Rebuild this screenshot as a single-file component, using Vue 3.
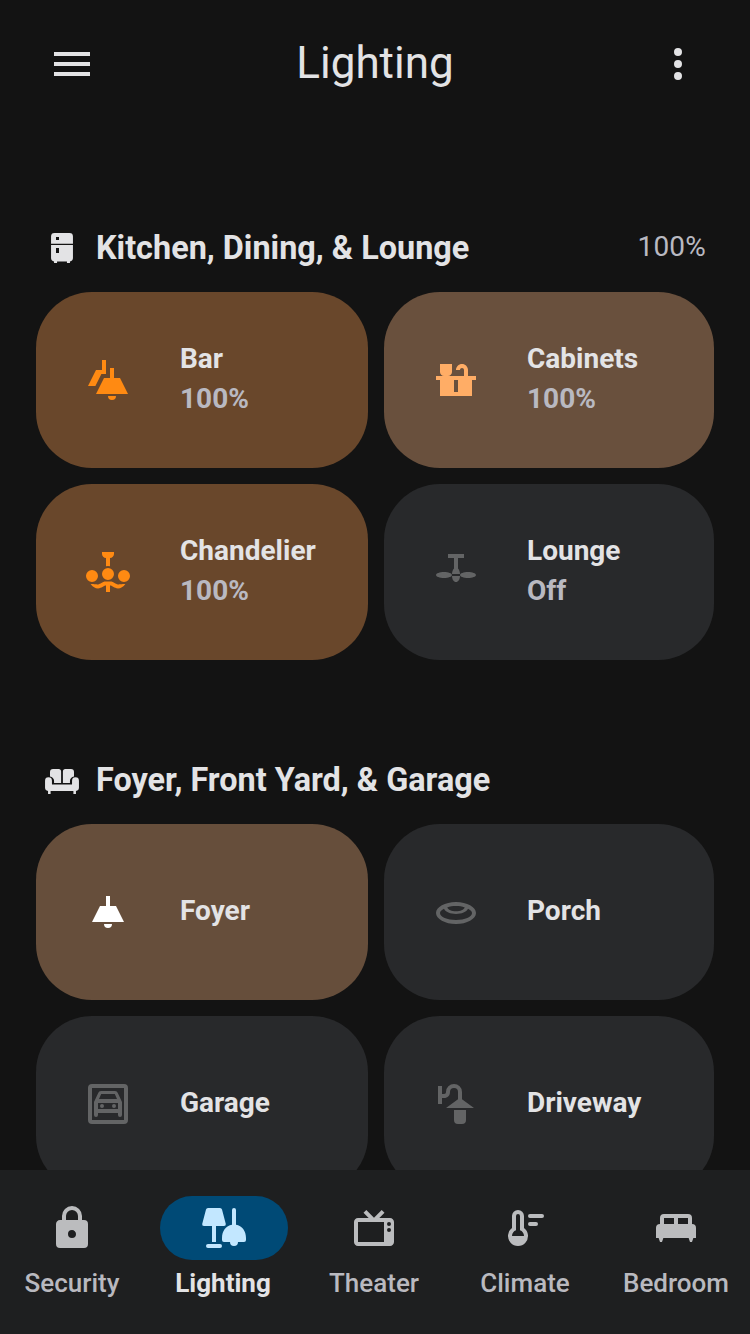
<script setup>
const icons = {
  menu: 'M3 6H21V8H3ZM3 11H21V13H3ZM3 16H21V18H3Z',
  more: 'M12 16a2 2 0 1 1 0 4 2 2 0 0 1 0-4M12 10a2 2 0 1 1 0 4 2 2 0 0 1 0-4M12 4a2 2 0 1 1 0 4 2 2 0 0 1 0-4',
  fridge: 'M7 2H17A2.3 2.3 0 0 1 19.3 4.3V9.2H4.7V4.3A2.3 2.3 0 0 1 7 2ZM4.7 10H19.3V18.7A2.3 2.3 0 0 1 17.3 21V22H15.3V21H8.7V22H6.7V21A2.3 2.3 0 0 1 4.7 18.7ZM8 4.7V6.7H10V4.7ZM8 12V15.3H10V12Z',
  sofa: 'M6 4.7H9.6A1.7 1.7 0 0 1 11.4 6.4V14H6.7V12.5C6.7 11 5.5 10 4 9.6V6.7A2 2 0 0 1 6 4.7ZM14.4 4.7H18A2 2 0 0 1 20 6.7V9.6C18.5 10 17.3 11 17.3 12.5V14H12.6V6.4A1.7 1.7 0 0 1 14.4 4.7ZM3 10.2A2.3 2.3 0 0 1 5.3 12.5V15H18.7V12.5A2.3 2.3 0 0 1 23.3 12.5V17.2A2.2 2.2 0 0 1 21.3 19.3V21.3H19.6V19.4H4.4V21.3H2.7V19.3A2.2 2.2 0 0 1 .7 17.2V12.5A2.3 2.3 0 0 1 3 10.2Z',
  pendants: 'M13 6H15V11H18L22 19H6L10 11H13ZM12 20H16A2 2 0 0 1 12 20ZM9 2H11V9H8.7L5.7 15H2L6 7H9Z',
  counter: 'M22 10H18V7C18 5.34 16.66 4 15 4S12 5.34 12 7H14C14 6.45 14.45 6 15 6S16 6.45 16 7V10H8C9.1 10 10 9.1 10 8V4H4V8C4 9.1 4.9 10 6 10H2V12H4V20H20V12H22ZM13 18H11V12H13Z',
  chandelier: 'M9 2H15V3C15 4.1 14.1 5 13 5V9.1A4 4 0 0 0 11 9.1V5C9.9 5 9 4.1 9 3ZM12 10a3 3 0 1 1 0 6 3 3 0 0 1 0-6M4 11a3 3 0 1 1 0 6 3 3 0 0 1 0-6M20 11a3 3 0 1 1 0 6 3 3 0 0 1 0-6M3.3 18C5.5 18 5.8 18.2 7 18.2C8.4 18.2 8.8 16.8 11 16.8H13C15.2 16.8 15.6 18.2 17 18.2C18.2 18.2 18.5 18 20.7 18C19.6 19.5 18.4 20.2 17 20.2C15 20.2 14.4 18.8 13 18.8V22H11V18.8C9.6 18.8 9 20.2 7 20.2C5.6 20.2 4.4 19.5 3.3 18Z',
  fan: 'M8 3H16V5H13V10.3C13.6 10.9 14 12 14 13H10C10 12 10.4 10.9 11 10.3V5H8ZM10 14H14C14 15.7 13.1 17 12 17S10 15.7 10 14ZM6 12C8.2 12 10 12.7 10 13.5S8.2 15 6 15 2 14.3 2 13.5 3.8 12 6 12ZM18 12C20.2 12 22 12.7 22 13.5S20.2 15 18 15 14 14.3 14 13.5 15.8 12 18 12Z',
  pendant: 'M11 4H13V9H16L20 17H4L8 9H11ZM10 18H14A2 2 0 0 1 10 18Z',
  recessed: 'M12 7C17.5 7 22 9.5 22 12.5S17.5 18 12 18 2 15.5 2 12.5 6.5 7 12 7ZM12 9C10.4 9 8.9 9.2 7.6 9.7C8.1 10.8 9.8 11.6 12 11.6S15.9 10.8 16.4 9.7C15.1 9.2 13.6 9 12 9ZM6 10.4C4.8 11 4 11.7 4 12.5C4 14.4 7.6 16 12 16S20 14.4 20 12.5C20 11.7 19.2 11 18 10.4C17.2 12 14.9 13 12 13S6.8 12 6 10.4Z',
  garage: 'M4 2H20A2 2 0 0 1 22 4V20A2 2 0 0 1 20 22H4A2 2 0 0 1 2 20V4A2 2 0 0 1 4 2ZM4 4V20H20V4ZM8.5 5.5H15.5A1.5 1.5 0 0 1 16.9 6.5L19 11V17.5A1 1 0 0 1 17 17.5V16.5H7V17.5A1 1 0 0 1 5 17.5V11L7.1 6.5A1.5 1.5 0 0 1 8.5 5.5ZM8.6 7L7.5 9.5H16.5L15.4 7ZM7 11.5V14.5H17V11.5ZM9 12a1 1 0 1 1 0 2 1 1 0 0 1 0-2M15 12a1 1 0 1 1 0 2 1 1 0 0 1 0-2',
  coach: 'M3 3H5V7H6C6.7 7 7 6.6 7 6A4 4 0 0 1 15 6V9.6L21 14H7L13 9.6V6A2 2 0 0 0 9 6C9 7.8 7.9 9 6 9H5V12H3ZM11 15H17V20A2 2 0 0 1 15 22H13A2 2 0 0 1 11 20Z',
  lock: 'M12 17A2 2 0 0 0 14 15C14 13.89 13.1 13 12 13A2 2 0 0 0 12 17M18 8A2 2 0 0 1 20 10V20A2 2 0 0 1 18 22H6A2 2 0 0 1 4 20V10C4 8.89 4.9 8 6 8H7V6A5 5 0 0 1 17 6V8H18M12 3A3 3 0 0 0 9 6V8H15V6A3 3 0 0 0 12 3Z',
  lamps: 'M4 2H10Q10.8 2 11 2.8L12.9 10Q13 11 12 11H8V19H6V11H2Q.9 11 1.1 10L3 2.8Q3.2 2 4 2ZM4 20H10A1 1 0 0 1 10 22H4A1 1 0 0 1 4 20ZM16 3A1 1 0 0 1 18 3V10.4C21 10.9 23 13.5 23 17V18Q23 19 22 19H19A2 2 0 0 1 15 19H12Q11 19 11 18V17C11 13.5 13 10.9 16 10.4Z',
  tv: 'M8.16 3L6.75 4.41L9.34 7H4C2.89 7 2 7.89 2 9V19C2 20.11 2.89 21 4 21H20C21.11 21 22 20.11 22 19V9C22 7.89 21.11 7 20 7H14.66L17.25 4.41L15.84 3L12 6.84ZM4 9H17V19H4ZM19.5 9a1 1 0 1 1 0 2 1 1 0 0 1 0-2M19.5 12a1 1 0 1 1 0 2 1 1 0 0 1 0-2',
  thermometer: 'M8 3A3 3 0 0 1 11 6V12A5 5 0 1 1 5 12V6A3 3 0 0 1 8 3M8 5A1 1 0 0 0 7 6V13.17C5.83 13.58 5 14.7 5 16H11C11 14.7 10.17 13.58 9 13.17V6A1 1 0 0 0 8 5M14 5H20A1 1 0 0 1 20 7H14A1 1 0 0 1 14 5M14 9H17A1 1 0 0 1 17 11H14A1 1 0 0 1 14 9',
  bed: 'M20 10V7A2 2 0 0 0 18 5H6A2 2 0 0 0 4 7V10A2 2 0 0 0 2 12V17H3.33L4 19H5L5.67 17H18.33L19 19H20L20.67 17H22V12A2 2 0 0 0 20 10M11 10H6V7H11ZM18 10H13V7H18Z'
}

const sections = [
  {
    title: 'Kitchen, Dining, & Lounge', icon: 'fridge', level: '100%',
    cards: [
      { name: 'Bar', state: '100%', icon: 'pendants', tone: 'amber' },
      { name: 'Cabinets', state: '100%', icon: 'counter', tone: 'peach' },
      { name: 'Chandelier', state: '100%', icon: 'chandelier', tone: 'amber' },
      { name: 'Lounge', state: 'Off', icon: 'fan', tone: 'off' }
    ]
  },
  {
    title: 'Foyer, Front Yard, & Garage', icon: 'sofa',
    cards: [
      { name: 'Foyer', icon: 'pendant', tone: 'white' },
      { name: 'Porch', icon: 'recessed', tone: 'off' },
      { name: 'Garage', icon: 'garage', tone: 'off' },
      { name: 'Driveway', icon: 'coach', tone: 'off' }
    ]
  }
]

const tabs = [
  { name: 'Security', icon: 'lock' },
  { name: 'Lighting', icon: 'lamps', active: true },
  { name: 'Theater', icon: 'tv' },
  { name: 'Climate', icon: 'thermometer' },
  { name: 'Bedroom', icon: 'bed' }
]
</script>

<template>
  <div class="app">
    <header class="top">
      <svg class="icon" viewBox="0 0 24 24"><path :d="icons.menu" /></svg>
      <h1>Lighting</h1>
      <svg class="icon" viewBox="0 0 24 24"><path :d="icons.more" /></svg>
    </header>

    <main>
      <section v-for="s in sections" :key="s.title">
        <div class="heading">
          <svg class="icon small" viewBox="0 0 24 24"><path fill-rule="evenodd" :d="icons[s.icon]" /></svg>
          <h2>{{ s.title }}</h2>
          <span v-if="s.level" class="level">{{ s.level }}</span>
        </div>
        <div class="cards">
          <div v-for="c in s.cards" :key="c.name" class="card" :class="c.tone">
            <svg class="icon" viewBox="0 0 24 24"><path fill-rule="evenodd" :d="icons[c.icon]" /></svg>
            <div class="text">
              <div>{{ c.name }}</div>
              <div v-if="c.state" class="state">{{ c.state }}</div>
            </div>
          </div>
        </div>
      </section>
    </main>

    <nav>
      <div v-for="t in tabs" :key="t.name" class="tab" :class="{ active: t.active }">
        <div class="pill">
          <svg class="icon" viewBox="0 0 24 24"><path fill-rule="evenodd" :d="icons[t.icon]" /></svg>
        </div>
        <span>{{ t.name }}</span>
      </div>
    </nav>
  </div>
</template>

<style>
body { background: #131313; }
</style>

<style scoped>
.app {
  display: flex;
  flex-direction: column;
  height: 1334px;
  overflow: hidden;
  background: #131313;
  color: #e3e3e5;
  font-family: Roboto, "Liberation Sans", sans-serif;
}
.icon { display: block; flex: none; width: 48px; height: 48px; fill: currentColor; }
.small { width: 36px; height: 36px; }
h1, h2 { margin: 0; }
.top {
  flex: none;
  display: flex;
  align-items: center;
  justify-content: space-between;
  height: 128px;
  padding: 0 48px;
  box-sizing: border-box;
}
h1 { padding-bottom: 2px; font-size: 44px; font-weight: 400; line-height: 56px; }
main { flex: 1; min-height: 0; overflow: hidden; padding: 76px 36px 0; }
section { margin-bottom: 76px; }
.heading {
  display: flex;
  align-items: center;
  height: 88px;
  padding: 0 8px;
}
h2 { margin-left: 16px; font-size: 32.4px; font-weight: 700; line-height: 40px; }
.level { margin-left: auto; padding-bottom: 4px; font-size: 28px; letter-spacing: 0.2px; color: #b9b9c1; }
.cards { display: grid; grid-template-columns: 332px 330px; grid-auto-rows: 176px; gap: 16px; }
.card {
  display: flex;
  align-items: center;
  padding-left: 48px;
  border-radius: 56px;
  background: #28292b;
}
.card .text { margin-left: 48px; padding-bottom: 2px; font-size: 28px; font-weight: 700; line-height: 40px; }
.card:nth-child(even) .text { margin-left: 47px; }
.card .state { color: #b9b9c1; }
.card.amber { background: #69472b; }
.card.amber .icon { color: #ff8a12; }
.card.peach { background: #69503d; }
.card.peach .icon { color: #ffad66; }
.card.white { background: #664e3b; }
.card.white .icon { color: #fff; }
.card.off .icon { color: #636465; }
nav {
  flex: none;
  display: grid;
  grid-template-columns: repeat(5, 151px);
  height: 164px;
  margin-left: -3.5px;
  padding-top: 26px;
  box-sizing: border-box;
  background: #1e1f20;
}
.tab {
  display: flex;
  flex-direction: column;
  align-items: center;
  color: #b9b9bf;
  font-size: 26px;
  font-weight: 500;
  line-height: 32px;
}
.tab span { margin-top: 7px; }
.tab:nth-child(even) .pill { margin-left: 2px; }
.pill {
  display: flex;
  align-items: center;
  justify-content: center;
  width: 128px;
  height: 64px;
  border-radius: 32px;
  color: #bbbcbe;
}
.active { color: #e3e3e5; font-weight: 700; }
.active .pill { background: #004a76; color: #c2e7ff; }
</style>
